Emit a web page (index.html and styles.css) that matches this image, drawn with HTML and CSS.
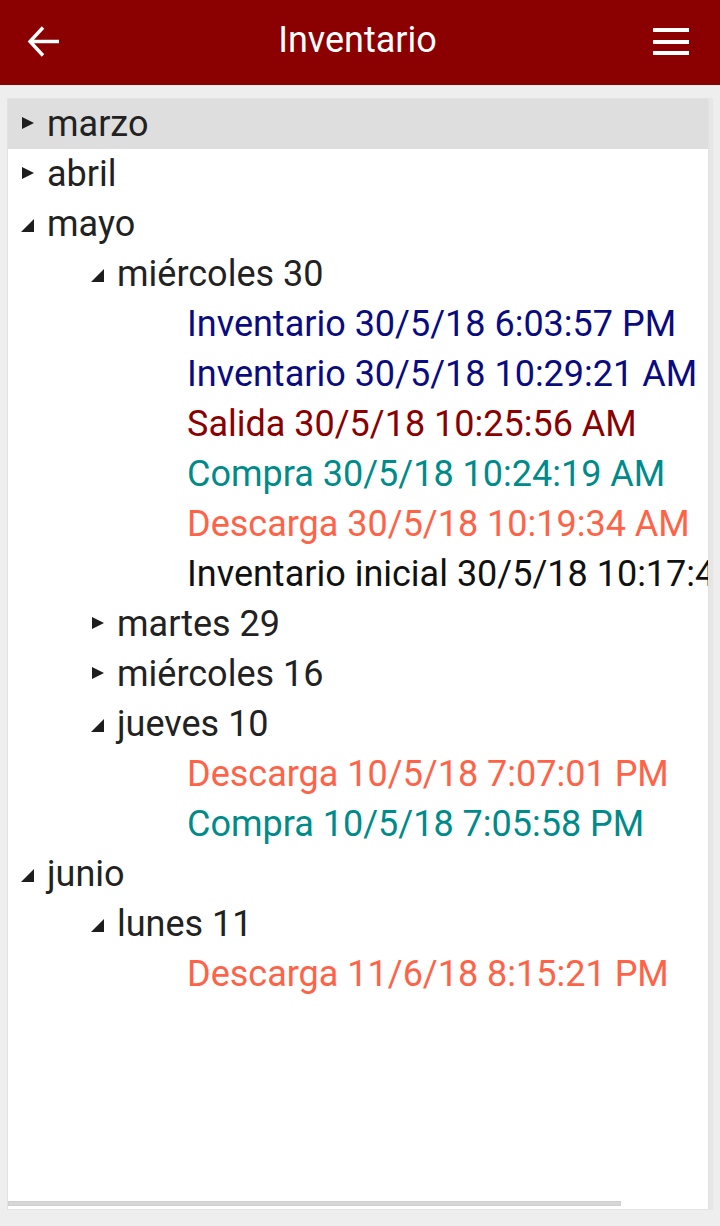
FILE: index.html
```html
<!DOCTYPE html>
<html lang="es">
<head>
<meta charset="utf-8">
<title>Inventario</title>
<link rel="stylesheet" href="styles.css">
</head>
<body>
<header class="appbar">
  <svg class="icon-back" width="36" height="36" viewBox="0 0 36 36"><path d="M33 17.5H4 M17 3.5L4 17.5L17 31.5" fill="none" stroke="#fff" stroke-width="3.4" stroke-linejoin="miter"/></svg>
  <h1 class="title">Inventario</h1>
  <svg class="icon-menu" width="36" height="28" viewBox="0 0 36 28"><rect x="0" y="0" width="36" height="4" fill="#fff"/><rect x="0" y="12" width="36" height="4" fill="#fff"/><rect x="0" y="23" width="36" height="4" fill="#fff"/></svg>
</header>
<main class="panel">
  <div class="tree">
    <div class="row l0 selected"><span class="tri closed"></span><span>marzo</span></div>
    <div class="row l0"><span class="tri closed"></span><span>abril</span></div>
    <div class="row l0"><span class="tri open"></span><span>mayo</span></div>
    <div class="row l1"><span class="tri open"></span><span>miércoles 30</span></div>
    <div class="row l2 inv">Inventario 30/5/18 6:03:57 PM</div>
    <div class="row l2 inv">Inventario 30/5/18 10:29:21 AM</div>
    <div class="row l2 sal">Salida 30/5/18 10:25:56 AM</div>
    <div class="row l2 com">Compra 30/5/18 10:24:19 AM</div>
    <div class="row l2 des">Descarga 30/5/18 10:19:34 AM</div>
    <div class="row l2 ini">Inventario inicial 30/5/18 10:17:48 AM</div>
    <div class="row l1"><span class="tri closed"></span><span>martes 29</span></div>
    <div class="row l1"><span class="tri closed"></span><span>miércoles 16</span></div>
    <div class="row l1"><span class="tri open"></span><span>jueves 10</span></div>
    <div class="row l2 des">Descarga 10/5/18 7:07:01 PM</div>
    <div class="row l2 com">Compra 10/5/18 7:05:58 PM</div>
    <div class="row l0"><span class="tri open"></span><span>junio</span></div>
    <div class="row l1"><span class="tri open"></span><span>lunes 11</span></div>
    <div class="row l2 des">Descarga 11/6/18 8:15:21 PM</div>
  </div>
  <div class="hscroll"><div class="thumb"></div></div>
</main>
</body>
</html>
```
FILE: styles.css
```css
html, body {
  margin: 0;
  padding: 0;
  height: 1226px;
  overflow: hidden;
}
body {
  background: #eeeeee;
  font-family: Roboto, "Liberation Sans", sans-serif;
  display: flex;
  flex-direction: column;
}
.appbar {
  height: 85px;
  flex: none;
  background: #8b0000;
  display: flex;
  align-items: center;
  justify-content: space-between;
  padding: 0 31px 0 26px;
  box-sizing: border-box;
}
.icon-back {
  display: block;
  margin-top: -2px;
}
.icon-menu {
  display: block;
  margin-top: -1px;
}
.title {
  margin: 0;
  font-weight: 400;
  font-size: 36px;
  color: #fff;
  padding-bottom: 6px;
  padding-left: 0;
}
.panel {
  flex: 1;
  margin: 13px 11px 16px 7px;
  background: #fff;
  border: 1px solid #e2e2e2;
  display: flex;
  flex-direction: column;
  overflow: hidden;
  box-shadow: 4px 0 0 #e6e6e6;
}
.tree {
  flex: 1;
  overflow: hidden;
}
.row {
  height: 50px;
  display: flex;
  align-items: center;
  white-space: nowrap;
  font-size: 36px;
  color: #222;
}
.row.selected {
  background: #dedede;
}
.l0 { padding-left: 13px; }
.l1 { padding-left: 83px; }
.l2 { padding-left: 179px; }
.tri {
  width: 14px;
  height: 14px;
  margin-right: 12px;
  flex: none;
  position: relative;
}
.tri.closed::before {
  content: "";
  position: absolute;
  left: 1px;
  top: 0;
  border-style: solid;
  border-width: 6.5px 0 6.5px 12px;
  border-color: transparent transparent transparent #1e1e1e;
}
.tri.open::before {
  content: "";
  position: absolute;
  left: 0;
  top: 2px;
  border-style: solid;
  border-width: 0 0 13px 13px;
  border-color: transparent transparent #1e1e1e transparent;
}
.inv { color: #0b0b80; }
.sal { color: #8b0000; }
.com { color: #008b8b; }
.des { color: #ff6347; }
.ini { color: #111; }
.hscroll {
  height: 7px;
  flex: none;
  padding: 0 0 2px 0;
}
.thumb {
  width: 613px;
  height: 5px;
  margin-top: 1px;
  background: #d7d7d7;
  border: 1px solid #cfcfcf;
  box-sizing: border-box;
}
```
